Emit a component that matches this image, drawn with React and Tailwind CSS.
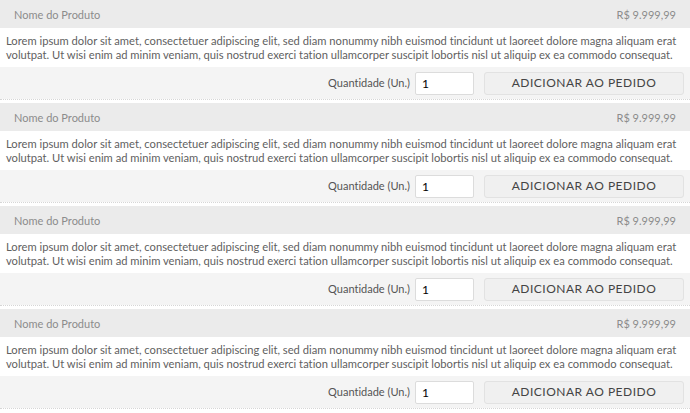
import React from "react";

const desc =
  "Lorem ipsum dolor sit amet, consectetuer adipiscing elit, sed diam nonummy nibh euismod tincidunt ut laoreet dolore magna aliquam erat volutpat. Ut wisi enim ad minim veniam, quis nostrud exerci tation ullamcorper suscipit lobortis nisl ut aliquip ex ea commodo consequat.";

const ProductRow = () => (
  <div className="mb-[3px] border-b border-dotted border-[#d6d6d6]">
    {/* Header */}
    <div className="flex h-[28px] items-center justify-between bg-[#ebebeb] px-[14px] pt-[2px] text-[11px] text-[#8c8c8c]">
      <span>Nome do Produto</span>
      <span>R$ 9.999,99</span>
    </div>

    {/* Description */}
    <div className="h-[39px] overflow-hidden bg-white px-[6px] pt-[6px] text-[11.2px] leading-[14px] text-[#5f5f5f]">
      {desc}
    </div>

    {/* Actions */}
    <div className="flex h-[32px] items-center justify-end gap-[5px] bg-[#f4f4f4] pr-[6px] text-[11px] text-[#555]">
      <span>Quantidade (Un.)</span>
      <input
        defaultValue="1"
        className="h-[23px] w-[59px] rounded-[2px] border border-[#dcdcdc] bg-white px-[6px] text-[12px] text-black outline-none"
      />
      <button className="ml-[5px] h-[23px] w-[200px] rounded-[3px] border border-[#e2e2e2] bg-[#f0f0f0] text-[12px] tracking-[0.5px] text-[#444]">
        ADICIONAR AO PEDIDO
      </button>
    </div>
  </div>
);

export default function App() {
  return (
    <div className="w-[690px] bg-white font-['Lato',sans-serif] [font-variant-ligatures:none]">
      <ProductRow />
      <ProductRow />
      <ProductRow />
      <ProductRow />
    </div>
  );
}
